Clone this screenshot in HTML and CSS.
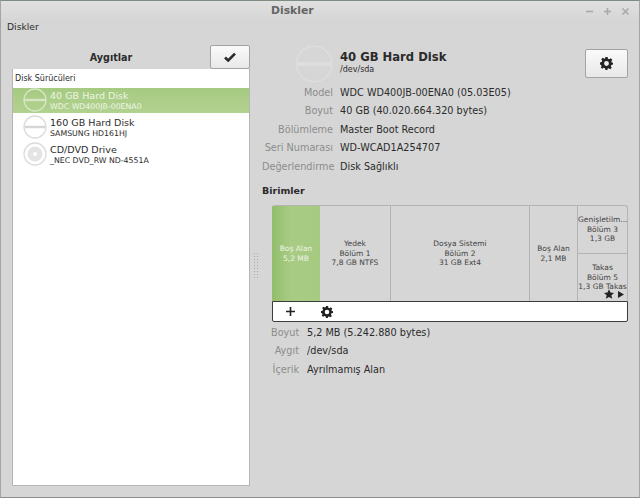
FILE: index.html
```html
<!DOCTYPE html>
<html lang="tr">
<head>
    <meta charset="UTF-8">
    <title>Diskler</title>
    <link rel="stylesheet" href="styles.css">
</head>
<body>
    <div class="window">
        <header class="titlebar">
            <span class="title">Diskler</span>
            <div class="win-buttons">
                <svg width="9" height="9" viewBox="0 0 9 9"><path d="M1 4.5h7" stroke="#a9a9a9" stroke-width="1.6"/></svg>
                <svg width="9" height="9" viewBox="0 0 9 9"><path d="M1 4.5h7M4.5 1v7" stroke="#a9a9a9" stroke-width="1.6"/></svg>
                <svg width="9" height="9" viewBox="0 0 9 9"><path d="M1.5 1.5l6 6M7.5 1.5l-6 6" stroke="#a9a9a9" stroke-width="1.6"/></svg>
            </div>
        </header>
        <div class="menubar">Diskler</div>
        <main class="content">
            <section class="devices">
                <div class="devices-head">
                    <h2>Aygıtlar</h2>
                    <button class="btn btn-check">
                        <svg width="12" height="10" viewBox="0 0 12 10"><path d="M1 5.5l3.2 3L11 1.6" fill="none" stroke="#2b2b2b" stroke-width="2.6"/></svg>
                    </button>
                </div>
                <div class="device-list">
                    <div class="list-caption">Disk Sürücüleri</div>
                    <div class="device selected">
                        <svg class="disk-icon" width="24" height="24" viewBox="0 0 24 24"><circle cx="12" cy="12" r="11" fill="none" stroke="#d5e6c4" stroke-width="1.3"/><path d="M1.5 12h21" stroke="#d5e6c4" stroke-width="2.4"/></svg>
                        <div>
                            <div class="device-name">40 GB Hard Disk</div>
                            <div class="device-model">WDC WD400JB-00ENA0</div>
                        </div>
                    </div>
                    <div class="device">
                        <svg class="disk-icon" width="24" height="24" viewBox="0 0 24 24"><circle cx="12" cy="12" r="11" fill="#fff" stroke="#dcdcdc" stroke-width="1.3"/><path d="M1.5 12h21" stroke="#d6d6d6" stroke-width="2.4"/></svg>
                        <div>
                            <div class="device-name">160 GB Hard Disk</div>
                            <div class="device-model">SAMSUNG HD161HJ</div>
                        </div>
                    </div>
                    <div class="device">
                        <svg class="disk-icon" width="24" height="24" viewBox="0 0 24 24"><circle cx="12" cy="12" r="11" fill="#fff" stroke="#dcdcdc" stroke-width="1.3"/><circle cx="12" cy="12" r="7.5" fill="#e4e4e4"/><circle cx="12" cy="12" r="2" fill="#fff"/></svg>
                        <div>
                            <div class="device-name">CD/DVD Drive</div>
                            <div class="device-model">_NEC DVD_RW ND-4551A</div>
                        </div>
                    </div>
                </div>
            </section>
            <div class="grip"></div>
            <section class="details">
                <div class="disk-head">
                    <svg class="disk-big" width="38" height="38" viewBox="0 0 38 38"><circle cx="19" cy="19" r="17.8" fill="none" stroke="#dedede" stroke-width="1.5"/><path d="M2 19h34" stroke="#dedede" stroke-width="4"/></svg>
                    <div class="disk-title">
                        <h1>40 GB Hard Disk</h1>
                        <div class="disk-dev">/dev/sda</div>
                    </div>
                    <button class="btn btn-gear">
                        <svg width="13" height="13" viewBox="0 0 24 24"><use href="#gear"/></svg>
                    </button>
                </div>
                <dl class="props disk-props">
                    <dt>Model</dt><dd>WDC WD400JB-00ENA0 (05.03E05)</dd>
                    <dt>Boyut</dt><dd>40 GB (40.020.664.320 bytes)</dd>
                    <dt>Bölümleme</dt><dd>Master Boot Record</dd>
                    <dt>Seri Numarası</dt><dd>WD-WCAD1A254707</dd>
                    <dt>Değerlendirme</dt><dd>Disk Sağlıklı</dd>
                </dl>
                <h3>Birimler</h3>
                <div class="volumes">
                    <div class="bar">
                        <div class="seg seg-free">Boş Alan<br>5,2 MB</div>
                        <div class="seg seg-1">Yedek<br>Bölüm 1<br>7,8 GB NTFS</div>
                        <div class="seg seg-2">Dosya Sistemi<br>Bölüm 2<br>31 GB Ext4</div>
                        <div class="seg seg-3">Boş Alan<br>2,1 MB</div>
                        <div class="seg-stack">
                            <div class="seg">Genişletilm...<br>Bölüm 3<br>1,3 GB</div>
                            <div class="seg seg-swap">
                                Takas<br>Bölüm 5<br>1,3 GB Takas
                                <div class="swap-icons">
                                    <svg width="10" height="10" viewBox="0 0 24 23"><path d="M12 0l3.600 8 8.400.8-6.300 5.700 1.800 8.500L12 18.600 4.500 23l1.800-8.500L0 8.800 8.400 8z" fill="#222"/></svg>
                                    <svg width="6" height="7" viewBox="0 0 7 8"><path d="M0 0l7 4-7 4z" fill="#222"/></svg>
                                </div>
                            </div>
                        </div>
                    </div>
                    <div class="toolbar">
                        <svg width="11" height="11" viewBox="0 0 11 11"><path d="M5.500 1v9M1 5.500h9" stroke="#222" stroke-width="1.600"/></svg>
                        <svg width="12" height="12" viewBox="0 0 24 24"><use href="#gear"/></svg>
                    </div>
                </div>
                <dl class="props vol-props">
                    <dt>Boyut</dt><dd>5,2 MB (5.242.880 bytes)</dd>
                    <dt>Aygıt</dt><dd>/dev/sda</dd>
                    <dt>İçerik</dt><dd>Ayrılmamış Alan</dd>
                </dl>
            </section>
        </main>
    </div>
    <svg width="0" height="0" class="defs">
        <symbol id="gear" viewBox="0 0 24 24">
            <path fill="#222" fill-rule="evenodd" d="M10 0h4l.7 3.300 2.300 1 2.900-1.800 2.800 2.800-1.800 2.900 1 2.300L24 10v4l-3.100.7-1 2.300 1.800 2.900-2.800 2.800-2.900-1.800-2.300 1L14 24h-4l-.7-3.100-2.300-1-2.900 1.800-2.800-2.800L3 16.900 2 14.700 0 14v-4l3.100-.7 1-2.300-1.800-2.900L5.100 1.300 8 3.100l1.300-.5zM12 7.500a4.500 4.500 0 1 0 0 9 4.500 4.500 0 0 0 0-9z"/>
        </symbol>
    </svg>
</body>
</html>
```

FILE: styles.css
```css
body, h1, h2, h3, dl, dd {
    margin: 0;
    padding: 0;
}

body {
    font-family: "DejaVu Sans", sans-serif;
    font-size: 9.7px;
    color: #2b2b2b;
    background: #d6d6d6;
    overflow: hidden;
}

.defs {
    position: absolute;
}

.window {
    height: 498px;
    box-sizing: border-box;
    display: flex;
    flex-direction: column;
    border-left: 1px solid #a5a5a5;
    border-right: 1px solid #a5a5a5;
    border-bottom: 1px solid #8c8c8c;
    border-top: 1px solid #7f8a80;
}

.titlebar {
    height: 19px;
    flex: none;
    display: flex;
    align-items: center;
    padding-left: 270px;
    position: relative;
    background: linear-gradient(#e0e0e0, #d6d6d6);
}

.title {
    font-weight: bold;
    font-size: 10.800px;
    color: #666;
}

.win-buttons {
    position: absolute;
    right: 9px;
    top: 6px;
    display: flex;
    gap: 9px;
}

.menubar {
    height: 15px;
    flex: none;
    padding-left: 6px;
    font-size: 9.200px;
    line-height: 14px;
}

.content {
    flex: 1;
    display: flex;
    padding: 10px 11px 11px 11px;
}

.devices {
    width: 238px;
    flex: none;
    display: flex;
    flex-direction: column;
}

.devices-head {
    display: flex;
    align-items: center;
    height: 24px;
}

.devices-head h2 {
    flex: 1;
    text-align: center;
    font-size: 9.600px;
    font-weight: bold;
}

.btn {
    display: flex;
    align-items: center;
    justify-content: center;
    padding: 0;
    border: 1px solid #a3a3a3;
    border-radius: 2px;
    background: linear-gradient(#fafafa, #e8e8e8);
}

.btn-check {
    width: 40px;
    height: 24px;
}

.device-list {
    flex: 1;
    background: #fff;
    border: 1px solid #b5b5b5;
    border-top: none;
}

.list-caption {
    height: 19px;
    line-height: 20px;
    font-size: 8px;
    padding-left: 2px;
}

.device {
    height: 25px;
    margin-bottom: 2px;
    display: flex;
    align-items: flex-start;
    gap: 3px;
    padding-left: 10px;
    line-height: 12px;
}

.device.selected {
    background: linear-gradient(#a6ca82, #b2d28f);
    color: #eef5e6;
}

.device-name {
    font-size: 9.550px;
    line-height: 13px;
    margin-top: 1px;
}

.device-model {
    font-size: 7.800px;
    line-height: 10px;
}

.grip {
    width: 12px;
    flex: none;
    margin-top: 207px;
    height: 28px;
    background: radial-gradient(circle, #a8a8a8 0.7px, transparent 1px) 0 0 / 3px 3px;
    background-clip: content-box;
    padding: 0 4px;
    box-sizing: border-box;
}

.details {
    flex: 1;
    min-width: 0;
}

.disk-head {
    display: flex;
    align-items: flex-start;
    height: 38px;
    padding-left: 33px;
}

.disk-big {
    flex: none;
}

.disk-title {
    margin-left: 7px;
    flex: 1;
}

.disk-title h1 {
    font-size: 11.600px;
    line-height: 15px;
    margin-top: 5px;
}

.disk-dev {
    font-size: 8px;
    line-height: 10px;
}

.btn-gear {
    width: 43px;
    height: 29px;
    margin-top: 4px;
}

.props {
    display: grid;
    row-gap: 5px;
    line-height: 13.400px;
}

.props dt {
    color: #8c8c8c;
    text-align: right;
    white-space: nowrap;
}

.disk-props {
    grid-template-columns: 71px 1fr;
    column-gap: 7px;
    margin-top: 3px;
}

h3 {
    font-size: 9.500px;
    font-weight: bold;
    line-height: 12px;
    margin-top: 12px;
}

.volumes {
    margin: 8px 0 0 10px;
    width: 356px;
}

.bar {
    display: flex;
    height: 96px;
    border: 1px solid #b3b3b3;
    border-bottom: none;
    border-radius: 3px 3px 0 0;
    box-sizing: border-box;
    font-size: 7.500px;
    line-height: 9.600px;
    color: #444;
    text-align: center;
}

.seg {
    display: block;
    border-right: 1px solid #b3b3b3;
    box-sizing: border-box;
    padding-top: 38px;
    white-space: nowrap;
}

.seg-free {
    width: 48px;
    margin-left: -1px;
    background: linear-gradient(90deg, #92bd6b, #a9cc85 40%, #a6ca82);
    color: #eef5e6;
    border-right: none;
}

.seg-1 {
    width: 71px;
    padding-top: 33px;
}

.seg-2 {
    width: 139px;
    padding-top: 33px;
}

.seg-3 {
    width: 48px;
}

.seg-stack {
    flex: 1;
    min-width: 0;
    display: flex;
    flex-direction: column;
}

.seg-stack .seg {
    height: 47px;
    border-right: none;
    padding-top: 9px;
    flex: none;
    overflow: hidden;
}

.seg-stack .seg-swap {
    flex: 1;
    height: auto;
    border-top: 1px solid #b3b3b3;
    position: relative;
    padding-top: 9px;
}

.swap-icons {
    position: absolute;
    right: 3px;
    bottom: 2px;
    display: flex;
    align-items: center;
    gap: 4px;
}

.toolbar {
    height: 21px;
    box-sizing: border-box;
    background: #fff;
    border: 1px solid #3c3c3c;
    border-radius: 0 0 2px 2px;
    display: flex;
    align-items: center;
    gap: 25px;
    padding-left: 12px;
}

.vol-props {
    grid-template-columns: 28px 1fr;
    column-gap: 8px;
    margin: 4px 0 0 9px;
}
```
